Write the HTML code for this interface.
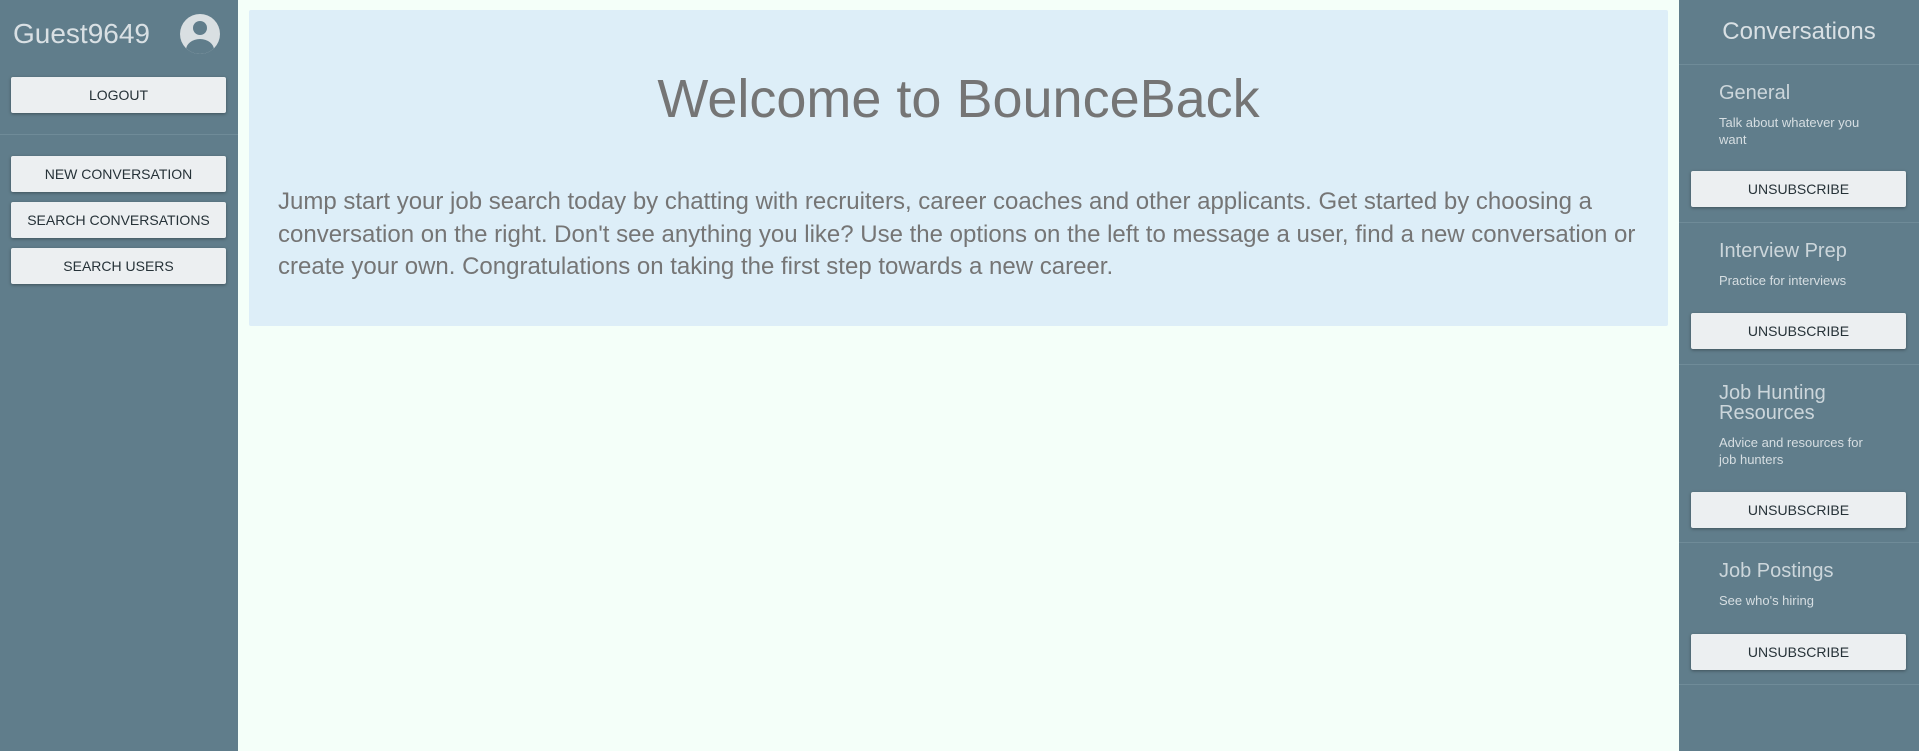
<!DOCTYPE html>
<html><head><meta charset="utf-8"><style>
*{margin:0;padding:0;box-sizing:border-box}
body{width:1919px;height:751px;overflow:hidden;background:#f4fff9;font-family:"Liberation Sans",Arial,sans-serif;position:relative}
.left{position:absolute;left:0;top:0;width:238px;height:751px;background:#607d8b}
.right{position:absolute;left:1679px;top:0;width:240px;height:751px;background:#607d8b}
.btn{position:absolute;height:36px;background:#eceff1;border-radius:2px;box-shadow:0 1px 3px rgba(0,0,0,.35);color:#263238;font-size:14px;text-align:center;line-height:36px}
.left .btn{left:11px;width:215px}
.right .btn{left:12px;width:215px}
.div{position:absolute;left:0;right:0;height:1px;background:#6f8b98}
.name{position:absolute;left:13px;top:18px;font-size:28px;color:#d9e0e4}
.av{position:absolute;left:180px;top:14px;width:40px;height:40px;border-radius:50%;background:#d9dfe2;overflow:hidden}
.main{position:absolute;left:249px;top:10px;width:1419px;height:316px;background:#ddeef8;border-radius:2px}
h1{position:absolute;left:0;right:0;top:58px;text-align:center;font-weight:normal;font-size:54px;color:#757575}
.p{position:absolute;left:29px;top:176px;font-size:24px;line-height:32.5px;color:#757575;white-space:nowrap}
.rt{position:absolute;left:0;right:0;top:18px;text-align:center;font-size:24px;color:#d9e0e4}
.h{position:absolute;left:40px;font-size:20px;color:#ccd6db;line-height:20px}
.d{position:absolute;left:40px;font-size:13px;color:#d6dee2;line-height:17px}
</style></head><body>
<div class="left">
<div class="name">Guest9649</div>
<div class="av"><div style="position:absolute;left:13px;top:7px;width:14px;height:14px;border-radius:50%;background:#607d8b"></div><div style="position:absolute;left:6px;top:25px;width:28px;height:22px;border-radius:50%;background:#607d8b"></div></div>
<div class="btn" style="top:77px">LOGOUT</div>
<div class="div" style="top:134px"></div>
<div class="btn" style="top:156px">NEW CONVERSATION</div>
<div class="btn" style="top:202px">SEARCH CONVERSATIONS</div>
<div class="btn" style="top:248px">SEARCH USERS</div>
</div>
<div class="main">
<h1>Welcome to BounceBack</h1>
<div class="p">Jump start your job search today by chatting with recruiters, career coaches and other applicants. Get started by choosing a<br>conversation on the right. Don't see anything you like? Use the options on the left to message a user, find a new conversation or<br>create your own. Congratulations on taking the first step towards a new career.</div>
</div>
<div class="right">
<div class="rt">Conversations</div>
<div class="div" style="top:64px"></div>
<div class="h" style="top:83px">General</div>
<div class="d" style="top:114px">Talk about whatever you<br>want</div>
<div class="btn" style="top:171px">UNSUBSCRIBE</div>
<div class="div" style="top:222px"></div>
<div class="h" style="top:241px">Interview Prep</div>
<div class="d" style="top:272px">Practice for interviews</div>
<div class="btn" style="top:313px">UNSUBSCRIBE</div>
<div class="div" style="top:364px"></div>
<div class="h" style="top:383px">Job Hunting<br>Resources</div>
<div class="d" style="top:434px">Advice and resources for<br>job hunters</div>
<div class="btn" style="top:492px">UNSUBSCRIBE</div>
<div class="div" style="top:542px"></div>
<div class="h" style="top:561px">Job Postings</div>
<div class="d" style="top:592px">See who's hiring</div>
<div class="btn" style="top:634px">UNSUBSCRIBE</div>
<div class="div" style="top:684px"></div>
</div>
</body></html>
